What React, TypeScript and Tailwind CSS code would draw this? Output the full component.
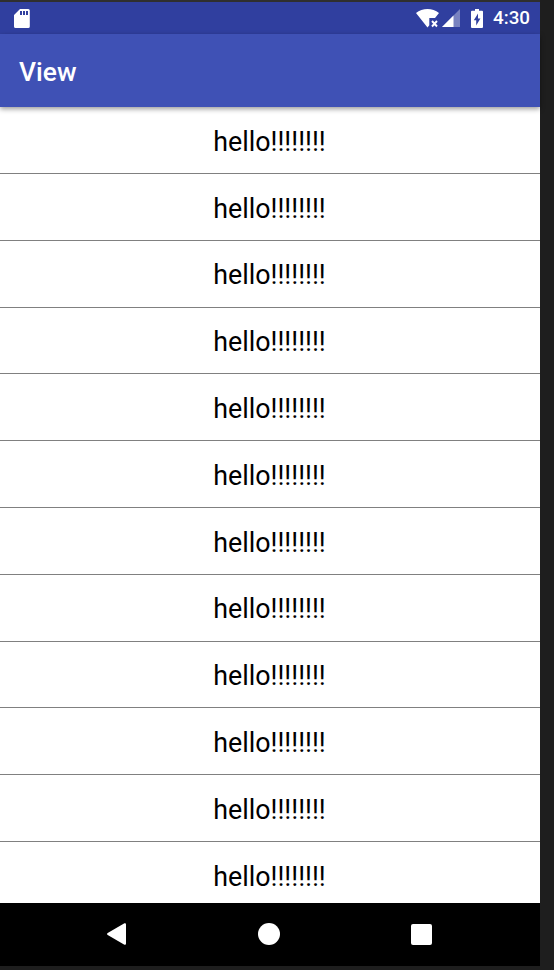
const greetings: string[] = Array.from({ length: 12 }, () => 'hello!!!!!!!!');

function SdCardIcon() {
  return (
    <svg width="16" height="19" viewBox="0 0 16 19">
      <path
        fill="#fff"
        fillRule="evenodd"
        d="M6 0h8.200a1.600 1.600 0 0 1 1.600 1.600v15.800a1.600 1.600 0 0 1-1.600 1.600H1.600A1.600 1.600 0 0 1 0 17.400V6ZM6 2v4h2V2Zm3 0v4h2V2Zm3 0v4h2V2Z"
      />
    </svg>
  );
}

function WifiOffIcon() {
  return (
    <svg width="23" height="19" viewBox="0 0 23 19">
      <path fill="#fff" d="M0 4C6.500-1.200 16.500-1.200 23 4l-4 5h-5.700v7.200L11.500 18.500Z" />
      <path stroke="#fff" strokeWidth="1.900" d="m16 12 5 5.500m0-5.500-5 5.500" />
    </svg>
  );
}

function SignalIcon() {
  return (
    <svg width="18" height="18" viewBox="0 0 18 18">
      <path fill="#fff" fillOpacity=".35" d="M18 0v18H0Z" />
      <path fill="#fff" d="M11.500 6.500V18H0Z" />
    </svg>
  );
}

function BatteryIcon() {
  return (
    <svg width="12" height="19" viewBox="0 0 12 19">
      <path
        fill="#fff"
        fillRule="evenodd"
        d="M4 0h4v1.700h3a1 1 0 0 1 1 1V18a1 1 0 0 1-1 1H1a1 1 0 0 1-1-1V2.700a1 1 0 0 1 1-1h3ZM7 4.500 2.800 11.300h2.400v5.200L9.400 9.500H7Z"
      />
    </svg>
  );
}

function StatusBar() {
  return (
    <div className="flex h-8 shrink-0 items-center bg-[#303f9f] pl-3.5 pr-2.5 text-white">
      <SdCardIcon />
      <div className="ml-auto flex items-center">
        <WifiOffIcon />
        <div className="ml-[3px]"><SignalIcon /></div>
        <div className="ml-[11px]"><BatteryIcon /></div>
        <span className="ml-[10px] text-[18.8px] leading-none font-medium">4:30</span>
      </div>
    </div>
  );
}

function NavigationBar() {
  return (
    <div className="flex h-[63px] shrink-0 items-center bg-black pb-px pl-[107px]">
      <svg width="19" height="22" viewBox="0 0 19 22">
        <path fill="#fff" d="M.7 10 17 .6c1-.6 2-.2 2 1v18.800c0 1.200-1 1.600-2 1L.7 12C-.2 11.500-.2 10.500.7 10Z" />
      </svg>
      <div className="ml-[132px] size-[22px] rounded-full bg-white" />
      <div className="ml-[131px] size-[21px] rounded-[2px] bg-white" />
    </div>
  );
}

export default function App() {
  return (
    <div className="h-[970px] w-[554px] overflow-hidden bg-[#1e1e1e] font-['Roboto',sans-serif]">
      <div className="h-0.5 w-[540px] bg-[#2f2f2f]" />
      <div className="flex h-[964px] w-[540px] flex-col">
        <StatusBar />
        <header className="relative z-10 flex h-[73px] shrink-0 items-center bg-[#3f51b5] pl-[19px] pt-1 shadow-[0_2px_5px_rgba(0,0,0,0.4)]">
          <h1 className="text-[26.4px] font-medium text-white">View</h1>
        </header>
        <ul className="min-h-0 flex-1 overflow-hidden bg-white pt-[0.3px]">
          {greetings.map((greeting, index) => (
            <li
              key={index}
              className="flex h-[66.8px] items-center justify-center border-b border-[#808080] pt-[3.6px] pr-px text-[26.8px] text-black"
            >
              {greeting}
            </li>
          ))}
        </ul>
        <NavigationBar />
      </div>
    </div>
  );
}
